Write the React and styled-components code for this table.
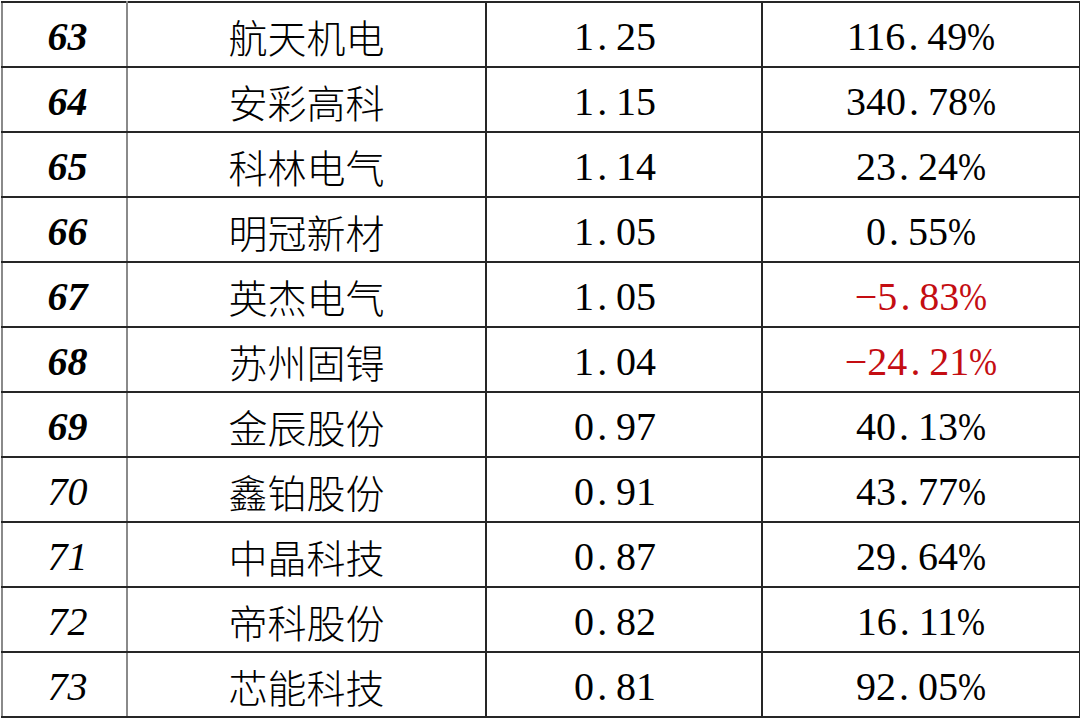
import styled, { createGlobalStyle } from 'styled-components';

const GlobalStyle = createGlobalStyle`
    html, body {
        margin: 0;
        padding: 0;
        background: #ffffff;
    }
`;

const Page = styled.div`
    width: 1080px;
    height: 720px;
    overflow: hidden;
    padding: 1px 0 0 1px;
    box-sizing: border-box;
    background: #ffffff;
`;

const Table = styled.table`
    width: 1078px;
    table-layout: fixed;
    border-collapse: collapse;
`;

const Row = styled.tr`
    height: 65px;
`;

const Cell = styled.td`
    padding: 4px 0 0 0;
    border: 2px solid #262626;
    text-align: center;
    vertical-align: middle;
    white-space: nowrap;
    line-height: 1;
    color: ${(p) => (p.$negative ? '#c40d12' : '#000000')};
`;

const RankCell = styled(Cell)`
    font-family: 'Liberation Serif', 'Times New Roman', serif;
    font-size: 40px;
    font-style: italic;
    font-weight: ${(p) => (p.$bold ? 700 : 400)};
    border-left-color: #8a8a8a;
    border-right-color: #8a8a8a;
    padding-left: 6px;
`;

const NameCell = styled(Cell)`
    font-family: 'Noto Sans CJK SC', 'Noto Sans', sans-serif;
    font-size: 39px;
    font-weight: 300;
`;

const NumberCell = styled(Cell)`
    font-family: 'Liberation Serif', 'Times New Roman', serif;
    font-size: 40px;
    font-weight: 400;
    padding-right: ${(p) => (p.$shift ? '18px' : '0')};
`;

const Dot = styled.span`
    display: inline-block;
    width: 0.55em;
    padding-left: 0.08em;
    box-sizing: border-box;
    text-align: left;
`;

// the percent sign is a narrow half-width glyph in the source font
const Pct = styled.span`
    display: inline-block;
    transform: scaleX(0.84);
    transform-origin: left center;
    margin-right: -0.13em;
`;

const rows = [
    { rank: 63, name: '航天机电', value: '1.25', change: '116.49%' },
    { rank: 64, name: '安彩高科', value: '1.15', change: '340.78%' },
    { rank: 65, name: '科林电气', value: '1.14', change: '23.24%' },
    { rank: 66, name: '明冠新材', value: '1.05', change: '0.55%' },
    { rank: 67, name: '英杰电气', value: '1.05', change: '−5.83%' },
    { rank: 68, name: '苏州固锝', value: '1.04', change: '−24.21%' },
    { rank: 69, name: '金辰股份', value: '0.97', change: '40.13%' },
    { rank: 70, name: '鑫铂股份', value: '0.91', change: '43.77%' },
    { rank: 71, name: '中晶科技', value: '0.87', change: '29.64%' },
    { rank: 72, name: '帝科股份', value: '0.82', change: '16.11%' },
    { rank: 73, name: '芯能科技', value: '0.81', change: '92.05%' },
];

// SimSun-style numbers: the decimal point takes almost a full digit cell
const Num = ({ text }) => {
    const percent = text.endsWith('%');
    const body = percent ? text.slice(0, -1) : text;
    const [head, tail] = body.split('.');
    return (
        <>
            {head}
            <Dot>.</Dot>
            {tail}
            {percent && <Pct>%</Pct>}
        </>
    );
};

const App = () => {
    return (
        <Page>
            <GlobalStyle />
            <Table>
                <colgroup>
                    <col style={{ width: 125 }} />
                    <col style={{ width: 359 }} />
                    <col style={{ width: 276 }} />
                    <col style={{ width: 318 }} />
                </colgroup>
                <tbody>
                    {rows.map((r) => (
                        <Row key={r.rank}>
                            <RankCell $bold={r.rank <= 69}>{r.rank}</RankCell>
                            <NameCell>{r.name}</NameCell>
                            <NumberCell $shift>
                                <Num text={r.value} />
                            </NumberCell>
                            <NumberCell $negative={r.change.startsWith('−')}>
                                <Num text={r.change} />
                            </NumberCell>
                        </Row>
                    ))}
                </tbody>
            </Table>
        </Page>
    );
};

export default App;
